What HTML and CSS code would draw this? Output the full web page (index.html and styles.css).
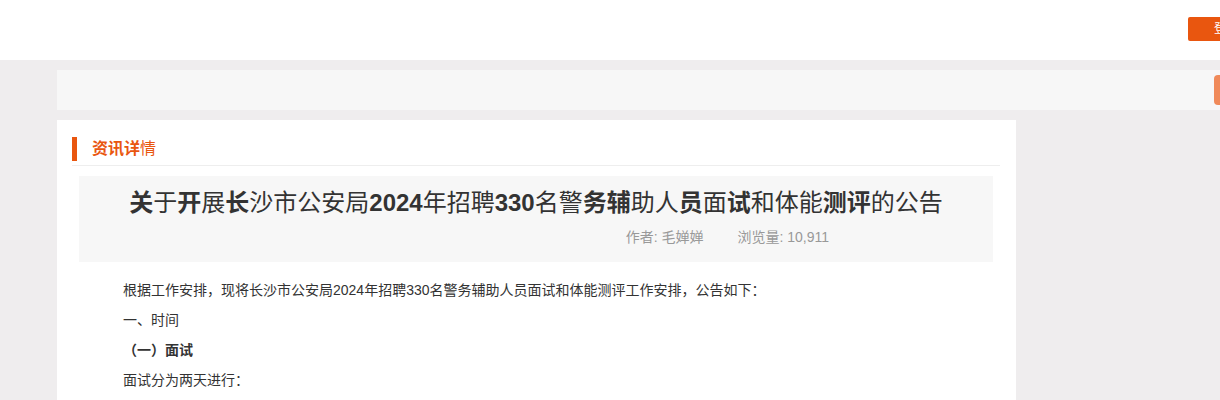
FILE: index.html
```html
<!DOCTYPE html>
<html lang="zh-CN">
<head>
    <meta charset="UTF-8">
    <meta name="viewport" content="width=device-width, initial-scale=1.0">
    <title>资讯详情</title>
    <link rel="stylesheet" href="styles.css">
</head>
<body>
    <div class="header">
        <div class="wrap header-inner">
            <a class="login-btn" href="#">登录</a>
        </div>
    </div>

    <div class="wrap">
        <div class="search-bar">
            <div class="search-space"></div>
            <button class="search-btn">搜索</button>
        </div>

        <div class="main-row">
            <div class="panel">
                <div class="panel-title">
                    <span class="mark"></span>
                    <h2><b>资讯详</b>情</h2>
                </div>

                <div class="article-head">
                    <h1><b>关</b>于<b>开</b>展<b>长</b>沙市公安局<b>2024</b>年招聘<b>330</b>名警<b>务辅</b>助人<b>员</b>面<b>试</b>和体能<b>测评</b>的公告</h1>
                    <div class="meta">
                        <span>作者: 毛婵婵</span>
                        <span>浏览量: 10,911</span>
                    </div>
                </div>

                <div class="article-body">
                    <p>根据工作安排，现将长沙市公安局2024年招聘330名警务辅助人员面试和体能测评工作安排，公告如下：</p>
                    <p>一、时间</p>
                    <p class="sub">（一）面试</p>
                    <p>面试分为两天进行：</p>
                </div>
            </div>
        </div>
    </div>
</body>
</html>
```

FILE: styles.css
```css
body {
    margin: 0;
    background-color: #efedee;
    font-family: "Liberation Sans", "Noto Sans CJK SC", sans-serif;
    color: #333;
    overflow-x: hidden;
}
.wrap {
    width: 1240px;
    margin-left: 57px;
}
.header {
    background-color: #fff;
    height: 60px;
}
.header-inner {
    display: flex;
    justify-content: flex-end;
    align-items: flex-start;
    height: 60px;
    box-sizing: border-box;
    padding-top: 17px;
    padding-right: 33px;
}
.login-btn {
    display: block;
    background-color: #e9560f;
    color: #fff;
    font-size: 12px;
    line-height: 24px;
    height: 24px;
    padding: 0 26px;
    border-radius: 2px;
    text-decoration: none;
}
.search-bar {
    margin-top: 10px;
    height: 40px;
    background-color: #f7f7f7;
    display: flex;
    align-items: center;
    padding-right: 5px;
}
.search-space {
    flex: 1;
}
.search-btn {
    width: 78px;
    height: 30px;
    background-color: #f08a5a;
    border: none;
    border-radius: 4px;
    color: #fff;
    font-size: 13px;
}
.main-row {
    display: flex;
    margin-top: 10px;
}
.panel {
    width: 959px;
    min-height: 300px;
    background-color: #fff;
    box-sizing: border-box;
    padding: 17px 16px 0 15px;
}
.panel-title {
    display: flex;
    align-items: center;
    height: 24px;
    padding-bottom: 4px;
    border-bottom: 1px solid #eee;
}
.panel-title .mark {
    width: 5px;
    height: 24px;
    background-color: #e9560f;
    margin-right: 15px;
}
.panel-title h2 {
    margin: 0;
    font-size: 16px;
    font-weight: normal;
    color: #e9560f;
    line-height: 24px;
}
.article-head {
    margin: 10px 7px 0;
    background-color: #f7f7f7;
    padding: 12px 0 15px;
    text-align: center;
}
.article-head h1 {
    margin: 0;
    font-size: 24px;
    font-weight: normal;
    line-height: 30px;
    color: #333;
}
.meta {
    margin-top: 9px;
    line-height: 20px;
    font-size: 14px;
    color: #999;
    display: flex;
    justify-content: flex-end;
    gap: 34px;
    padding-right: 164px;
}
.article-body {
    padding: 13px 0 0 51px;
}
.article-body p {
    margin: 0;
    font-size: 14px;
    line-height: 30px;
}
.article-body .sub {
    font-weight: bold;
}
```
